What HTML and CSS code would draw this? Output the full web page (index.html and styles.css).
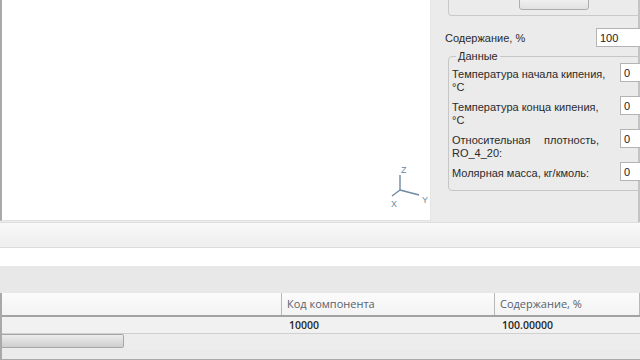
FILE: index.html
```html
<!DOCTYPE html>
<html lang="ru">
<head>
  <meta charset="UTF-8">
  <title>Компонент</title>
  <link rel="stylesheet" href="styles.css">
</head>
<body>
  <div class="app">
    <div class="top">
      <div class="viewport">
        <!-- axes triad -->
        <svg class="axes" width="44" height="48" viewBox="0 0 44 48">
          <g stroke="#6f8aa3" stroke-width="1.4" fill="none">
            <path d="M12 12 V27"/>
            <path d="M12 27 L4 33"/>
            <path d="M12 27 L31 32"/>
          </g>
          <text x="13" y="10" class="axis-label">Z</text>
          <text x="3" y="44" class="axis-label">X</text>
          <text x="34" y="40" class="axis-label">Y</text>
        </svg>
      </div>
      <div class="side">
        <div class="top-group">
          <button type="button" class="calc-btn"></button>
        </div>

        <div class="field-row">
          <label for="content">Содержание, %</label>
          <input type="text" id="content" value="100">
        </div>

        <fieldset class="data-group">
          <legend>Данные</legend>
          <div class="field-row">
            <label for="tStart">Температура начала кипения, °C</label>
            <input type="text" id="tStart" value="0">
          </div>
          <div class="field-row">
            <label for="tEnd">Температура конца кипения, °C</label>
            <input type="text" id="tEnd" value="0">
          </div>
          <div class="field-row">
            <label for="density" class="justify">Относительная плотность, RO_4_20:</label>
            <input type="text" id="density" value="0">
          </div>
          <div class="field-row single">
            <label for="mass">Молярная масса, кг/кмоль:</label>
            <input type="text" id="mass" value="0">
          </div>
        </fieldset>
      </div>
    </div>

    <div class="toolbar"></div>
    <div class="white-bar"></div>
    <div class="gray-bar"></div>

    <div class="grid">
      <div class="grid-head">
        <div class="cell c1"></div>
        <div class="cell c2">Код компонента</div>
        <div class="cell c3">Содержание, %</div>
      </div>
      <div class="grid-row">
        <div class="cell c1"></div>
        <div class="cell c2">10000</div>
        <div class="cell c3">100.00000</div>
      </div>
      <div class="hscroll">
        <div class="thumb"></div>
      </div>
    </div>
  </div>
</body>
</html>
```

FILE: styles.css
```css
* {
  box-sizing: border-box;
}
body {
  margin: 0;
  background: #ececec;
  font-family: "Liberation Sans", Arial, sans-serif;
  font-size: 11px;
  color: #2a2a2a;
}
.app {
  width: 640px;
  height: 360px;
  overflow: hidden;
  display: flex;
  flex-direction: column;
}
.top {
  display: flex;
  height: 222px;
}
.viewport {
  position: relative;
  width: 431px;
  height: 221px;
  background: #fff;
  border-left: 2px solid #a9a9a9;
  border-bottom: 1px solid #e2e2e2;
  border-right: 1px solid #e4e4e4;
}
.axes {
  position: absolute;
  left: 386px;
  top: 163px;
}
.axis-label {
  font-size: 9px;
  fill: #6f8aa3;
  font-family: "Liberation Sans", Arial, sans-serif;
}
.side {
  flex: 1;
  background: #ebebeb;
  border-right: 2px solid #c4c4c4;
  padding-left: 14px;
  position: relative;
}
.top-group {
  height: 16px;
  margin-left: 3px;
  margin-right: -4px;
  border: 1px solid #c9c9c9;
  border-top: none;
  border-radius: 0 0 4px 4px;
  position: relative;
}
.calc-btn {
  position: absolute;
  left: 70px;
  top: -4px;
  width: 70px;
  height: 14px;
  border: 1px solid #adadad;
  border-radius: 3px;
  background: linear-gradient(#f4f4f4, #e2e2e2);
}
.field-row {
  display: flex;
  justify-content: space-between;
  align-items: flex-start;
}
.side > .field-row {
  margin-top: 12px;
  align-items: center;
}
.side > .field-row label {
  padding-top: 1px;
}
.side > .field-row input {
  width: 46px;
  margin-right: -4px;
}
input {
  width: 23px;
  height: 19px;
  border: 1px solid #b4b4b4;
  border-right: none;
  background: #fff;
  font-family: "Liberation Sans", Arial, sans-serif;
  font-size: 11px;
  color: #222;
  padding: 0 3px;
  margin: 0;
}
.data-group {
  margin: 3px -6px 0 3px;
  padding: 1px 0 4px 3px;
  border: 1px solid #c6c6c6;
  border-radius: 4px;
}
.data-group legend {
  padding: 0 2px;
  margin-left: 4px;
  color: #2a2a2a;
}
.data-group .field-row {
  height: 33px;
}
.data-group .field-row.single {
  height: 24px;
}
.data-group label {
  width: 156px;
  line-height: 13px;
  padding-top: 5px;
}
.data-group label.justify {
  width: 147px;
  margin-right: 9px;
  text-align: justify;
  text-align-last: left;
}
.toolbar {
  height: 26px;
  border-top: 1px solid #dedede;
  border-bottom: 1px solid #dcdcdc;
  background: linear-gradient(#f9f9f9, #f3f3f3 50%, #efefef);
}
.white-bar {
  height: 18px;
  background: #fff;
}
.gray-bar {
  height: 27px;
  background: #e8e8e8;
}
.grid {
  flex: 1;
  display: flex;
  flex-direction: column;
  border-left: 2px solid #a9a9a9;
  font-family: "Open Sans", "Liberation Sans", sans-serif;
  font-size: 11px;
}
.grid-head {
  display: flex;
  height: 24px;
  background: linear-gradient(#fbfbfb, #f3f3f3);
  border-bottom: 2px solid #a3a3a3;
  color: #56616c;
}
.grid-head .cell {
  border-right: 1px solid #b8b8b8;
  line-height: 22px;
}
.grid-row {
  display: flex;
  height: 17px;
  background: #f1f1f1;
  border-bottom: 1px solid #cfcfcf;
  color: #262626;
  font-weight: 600;
  font-size: 10.5px;
  line-height: 16px;
}
.cell {
  padding-left: 5px;
  white-space: nowrap;
}
.c1 {
  width: 280px;
}
.c2 {
  width: 213px;
}
.c3 {
  flex: 1;
}
.grid-row .c2,
.grid-row .c3 {
  padding-left: 7px;
}
.hscroll {
  height: 15px;
  background: #ededed;
}
.thumb {
  width: 122px;
  height: 14px;
  border: 1px solid #a6a6a6;
  border-left: none;
  border-radius: 0 2px 2px 0;
  background: linear-gradient(#ececec, #dadada 60%, #cfcfcf);
}
.grid::after {
  content: "";
  flex: 1;
  background: #ebebeb;
  border-bottom: 1px solid #a9a9a9;
}
```
